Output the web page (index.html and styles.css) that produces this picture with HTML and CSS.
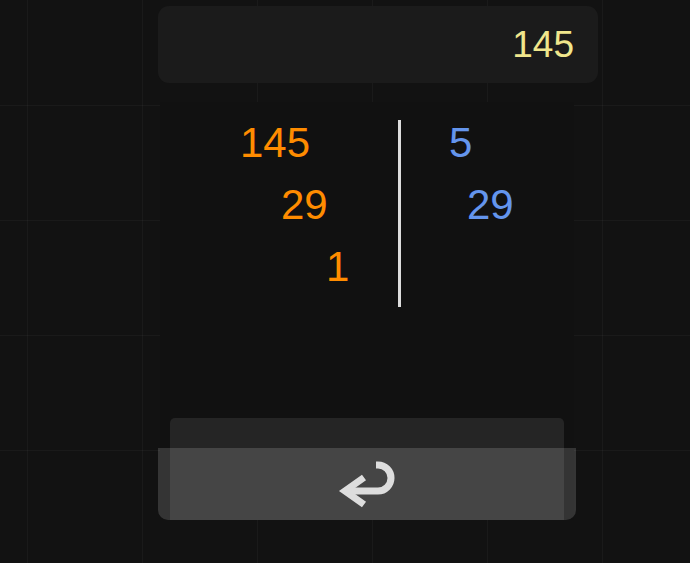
FILE: index.html
```html
<!DOCTYPE html>
<html lang="en">
<head>
<meta charset="utf-8">
<title>Division</title>
<link rel="stylesheet" href="styles.css">
</head>
<body>
  <div class="display">145</div>
  <div class="panel">
    <div class="division">
      <div class="col col-left">
        <div class="num step-0">145</div>
        <div class="num step-1">29</div>
        <div class="num step-2">1</div>
      </div>
      <div class="divider"></div>
      <div class="col col-right">
        <div class="num fac-0">5</div>
        <div class="num fac-1">29</div>
      </div>
    </div>
    <div class="key">
      <div class="key-face">
        <svg class="icon" width="60" height="50" viewBox="0 0 60 50" aria-hidden="true">
          <path d="M10 31 H41 A13 13 0 0 0 41 5 H39" fill="none" stroke="#dddddd" stroke-width="7"/>
          <path d="M27 17.5 L8 31 L27 44.5" fill="none" stroke="#dddddd" stroke-width="7" stroke-linejoin="miter"/>
        </svg>
      </div>
    </div>
  </div>
</body>
</html>
```
FILE: styles.css
```css
html, body {
  margin: 0;
  padding: 0;
}
body {
  width: 690px;
  height: 563px;
  overflow: hidden;
  padding-top: 6px;
  box-sizing: border-box;
  font-family: "Liberation Sans", Arial, sans-serif;
  background-color: #121212;
  background-image:
    linear-gradient(to right, rgba(255,255,255,0.035) 1px, transparent 1px),
    linear-gradient(to bottom, rgba(255,255,255,0.035) 1px, transparent 1px);
  background-size: 115px 115px;
  background-position: 27px 105px;
}
.display {
  margin-left: 158px;
  width: 440px;
  height: 77px;
  box-sizing: border-box;
  padding-right: 24px;
  border-radius: 11px;
  background: #1b1b1b;
  display: flex;
  align-items: center;
  justify-content: flex-end;
  font-size: 37px;
  color: #f0e68c;
}
.panel {
  margin-left: 160px;
  margin-top: 19px;
  width: 414px;
  height: 418px;
  background: #111111;
  display: flex;
  flex-direction: column;
}
.division {
  display: flex;
  align-items: flex-start;
}
.col {
  font-size: 42px;
  line-height: 62px;
  padding-top: 10px;
}
.col-left {
  width: 238px;
  color: #ff8c00;
}
.col-right {
  color: #6495ed;
}
.step-0 { padding-left: 80px; }
.step-1 { padding-left: 121px; }
.step-2 { padding-left: 166px; }
.fac-0 { padding-left: 48px; }
.fac-1 { padding-left: 66px; }
.divider {
  width: 3px;
  height: 187px;
  margin-top: 18px;
  background: #dddddd;
}
.key {
  margin: auto 10px 0;
  height: 102px;
  background: #252525;
  border-radius: 5px 5px 0 0;
  position: relative;
}
.key-face {
  position: absolute;
  left: -12px;
  right: -12px;
  top: 30px;
  bottom: 0;
  background: rgba(255,255,255,0.15);
  border-radius: 0 0 10px 10px;
  display: flex;
  align-items: center;
  justify-content: center;
}
.icon {
  display: block;
  margin-top: 2px;
}
```
